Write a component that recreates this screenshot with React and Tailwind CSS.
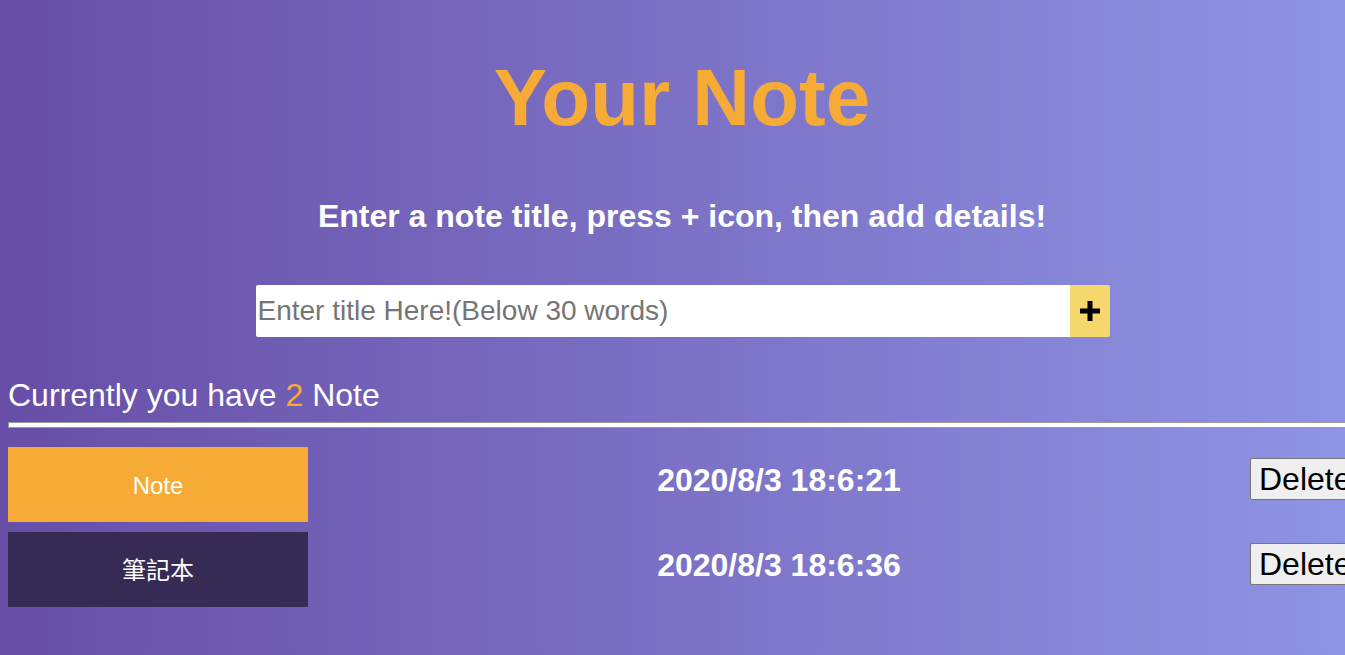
export default function App() {
  const notes = [
    { title: "Note", date: "2020/8/3 18:6:21", bg: "bg-[#f5ab35]" },
    { title: "筆記本", date: "2020/8/3 18:6:36", bg: "bg-[#352b55]" },
  ];
  return (
    <div className="w-[1345px] h-[655px] overflow-hidden bg-gradient-to-r from-[#674ea7] to-[#8f94e4] font-['Liberation_Sans','Noto_Sans_CJK_TC',sans-serif]">
      <div className="w-[1364px] px-2">
        <h1 className="pt-[52px] text-center text-[80px] font-bold leading-[92px] text-[#f5ab35]">Your Note</h1>
        <p className="mt-[56px] text-center text-[32px] font-bold leading-[32px] text-white">
          Enter a note title, press + icon, then add details!
        </p>
        <div className="mt-[53px] flex justify-center">
          <div className="flex h-[52px] ml-[1px]">
            <input
              className="w-[814px] h-[52px] bg-white px-[2px] text-[28px] text-black outline-none placeholder:text-[#757575] rounded-l-[2px]"
              placeholder="Enter title Here!(Below 30 words)"
            />
            <button className="w-[40px] h-[52px] bg-[#f5d76e] flex items-center justify-center rounded-r-[2px]">
              <svg width="24" height="24" viewBox="0 0 24 24">
                <path d="M12 2v20M2 12h20" stroke="black" strokeWidth="5" />
              </svg>
            </button>
          </div>
        </div>
        <p className="mt-[42px] text-[32px] leading-[32px] text-white">
          Currently you have <span className="text-[#f5ab35]">2</span> Note
        </p>
        <div className="mt-[11px] h-[6px] bg-white border border-[#9a9a9a] -mr-2" />
        <div className="mt-[19px] flex flex-col gap-[10px]">
          {notes.map((n) => (
            <div key={n.date} className="flex items-start">
              <div className={`w-[300px] h-[75px] ${n.bg} flex items-center justify-center pt-[3px] text-[24px] text-white`}>
                {n.title}
              </div>
              <div className="flex-1 text-center text-[32px] font-bold text-white leading-[32px] mt-[17px]">
                {n.date}
              </div>
              <button className="mt-[11px] w-[106px] h-[42px] text-left pl-[8px] text-[32px] text-black bg-[#efefef] border border-[#767676] rounded-[2px] leading-none whitespace-nowrap overflow-hidden">
                Delete
              </button>
            </div>
          ))}
        </div>
      </div>
    </div>
  );
}
